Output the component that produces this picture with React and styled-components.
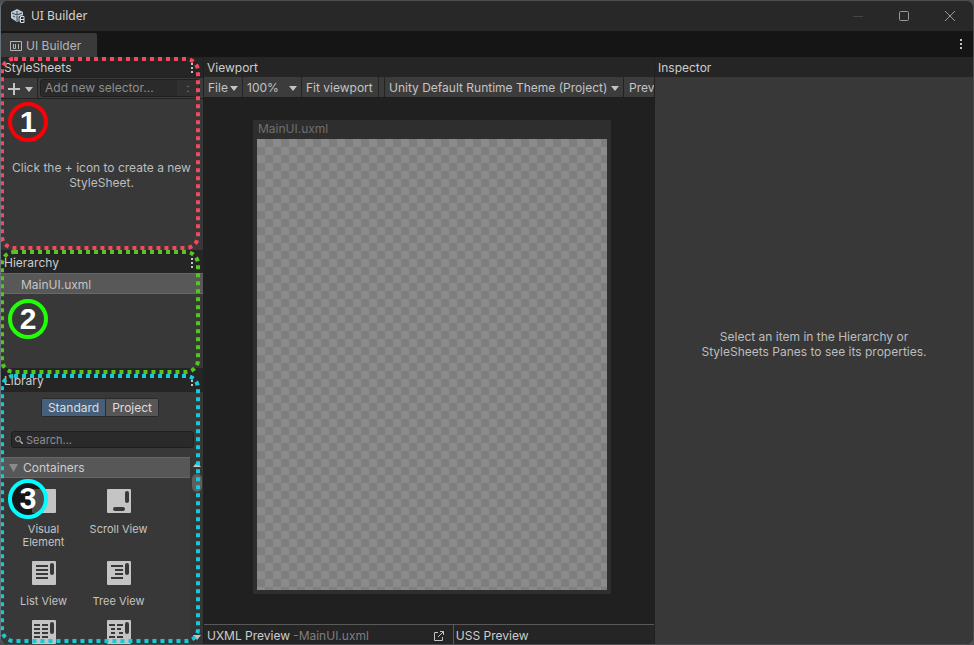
import React, { useState } from "react";
import styled, { createGlobalStyle } from "styled-components";

const GlobalStyle = createGlobalStyle`
  * { box-sizing: border-box; }
  body {
    margin: 0;
    background: #4c4e50;
    color: #c4c4c4;
    font: 12px/14px Inter, sans-serif;
    overflow: hidden;
  }
  button, input, select {
    font: inherit;
    color: inherit;
    margin: 0;
  }
  button {
    border: 0;
    padding: 0;
    background: none;
  }
`;

const Window = styled.div`
  height: 100vh;
  display: flex;
  flex-direction: column;
  background: #202020;
  border: 1px solid #4c4e50;
  border-left-color: #68707a;
  border-radius: 8px;
  overflow: hidden;
`;

const TitleBar = styled.header`
  flex: none;
  height: 30px;
  display: flex;
  align-items: center;
  padding: 0 17px 0 9px;
  gap: 5px;
  background: #282828;
`;

const Title = styled.h1`
  flex: 1;
  margin: 0;
  font: 12px/16px "Noto Sans", sans-serif;
  color: #d4d4d4;
`;

const WindowButtons = styled.div`
  display: flex;
  gap: 34px;
`;

const IconButton = styled.button`
  display: flex;
  align-items: center;
  justify-content: center;
  color: ${(p) => p.$color || "#c4c4c4"};
`;

const TabStrip = styled.nav`
  flex: none;
  height: 26px;
  display: flex;
  align-items: flex-end;
  justify-content: space-between;
  padding-right: 10px;
  background: #151515;
`;

const Tab = styled.button`
  height: 24px;
  width: 96px;
  display: flex;
  align-items: center;
  gap: 4px;
  padding: 2px 0 0 9px;
  color: #b4b4b4;
  background: #3a3a3a;
  border-radius: 2px 2px 0 0;
`;

const MenuSlot = styled.div`
  height: 26px;
  display: flex;
  align-items: center;
`;

const Workspace = styled.main`
  flex: 1;
  min-height: 0;
  display: flex;
  gap: 1px;
`;

const Sidebar = styled.aside`
  flex: none;
  width: 202px;
  display: flex;
  flex-direction: column;
`;

const Pane = styled.section`
  position: relative;
  z-index: ${(p) => p.$layer};
  flex: ${(p) => p.$grow} 1 0;
  min-height: 0;
  display: flex;
  flex-direction: column;
  background: #383838;
`;

const PaneHeader = styled.div`
  flex: none;
  height: ${(p) => p.$height || 20}px;
  display: flex;
  align-items: center;
  justify-content: space-between;
  padding: 2px 9px 0 3px;
  background: #252525;
`;

const PaneTitle = styled.h2`
  margin: 0;
  font-size: 12px;
  font-weight: 400;
  line-height: 14px;
  color: #cdcdcd;
`;

const Outline = styled.svg`
  position: absolute;
  inset: 0;
  width: 100%;
  height: 100%;
  overflow: visible;
  pointer-events: none;

  rect {
    x: 1px;
    y: ${(p) => p.$top}px;
    width: calc(100% - 6px);
    height: calc(100% + ${(p) => p.$extra}px);
    fill: none;
    stroke: ${(p) => p.$color};
    stroke-width: 4px;
    stroke-dasharray: 4 4;
  }
`;

const Badge = styled.span`
  position: absolute;
  left: 7px;
  top: ${(p) => p.$top}px;
  width: 40px;
  height: 40px;
  display: flex;
  align-items: center;
  justify-content: center;
  border: 4px solid ${(p) => p.$color};
  border-radius: 50%;
  background: ${(p) => p.$fill || "none"};
  color: #fff;
  font: bold 30px/32px ${(p) => p.$face || '"Liberation Sans"'}, sans-serif;
`;

const SelectorBar = styled.div`
  flex: none;
  height: 22px;
  display: flex;
  align-items: center;
  background: #3c3c3c;
  border-top: 1px solid #232323;
  border-bottom: 1px solid #232323;
`;

const AddButton = styled.button`
  height: 20px;
  width: 37px;
  display: flex;
  align-items: center;
  justify-content: center;
  gap: 5px;
  padding: 2px 0 0 2px;
  border-right: 1px solid #232323;
`;

const SelectorField = styled.div`
  flex: 1;
  min-width: 0;
  height: 18px;
  display: flex;
  margin: 0 3px 0 2px;
  background: #2a2a2a;
  border: 1px solid #202020;
  border-radius: 3px;
  overflow: hidden;
`;

const SelectorInput = styled.input`
  flex: 1;
  min-width: 0;
  padding: 0 4px;
  border: 0;
  background: none;

  &::placeholder { color: #8e8e8e; opacity: 1; }
`;

const PseudoButton = styled.button`
  width: 22px;
  color: #777;
  background: #303030;
`;

const Hint = styled.p`
  flex: 1;
  margin: 0;
  padding: ${(p) => p.$pad};
  display: flex;
  align-items: center;
  justify-content: center;
  text-align: center;
  line-height: 15px;
  color: #bdbdbd;
`;

const TreeRow = styled.button`
  flex: none;
  height: 21px;
  padding: 2px 0 0 20px;
  text-align: left;
  background: #585858;
  border-top: 1px solid #666;
  border-bottom: 1px solid #666;
`;

const Segments = styled.div`
  flex: none;
  align-self: center;
  display: flex;
  margin-top: 6px;
  margin-right: 4px;
  border: 1px solid #2a2a2a;
  border-radius: 3px;
`;

const Segment = styled.button`
  height: 17px;
  padding: 0 6px;
  color: #dedede;
  background: ${(p) => (p.$active ? "#46607c" : "#565656")};

  & + & { border-left: 1px solid #2a2a2a; }
`;

const SearchBox = styled.label`
  flex: none;
  height: 17px;
  display: flex;
  align-items: center;
  gap: 3px;
  margin: 14px 9px 9px 10px;
  padding: 0 3px;
  background: #2a2a2a;
  border: 1px solid #1e1e1e;
  border-radius: 3px;
  color: #b0b0b0;

  input {
    flex: 1;
    min-width: 0;
    padding: 0;
    border: 0;
    background: none;
    font-size: 11px;
  }
  input::placeholder { color: #8e8e8e; opacity: 1; }
`;

const LibraryBody = styled.div`
  flex: 1;
  min-height: 0;
  display: flex;
`;

const LibraryList = styled.div`
  flex: 1;
  overflow: hidden;
`;

const Foldout = styled.button`
  width: 100%;
  height: 21px;
  display: flex;
  align-items: center;
  gap: 5px;
  padding-left: 8px;
  color: #cdcdcd;
  background: #575757;
  border-top: 1px solid #666;
  border-bottom: 1px solid #666;
`;

const Tiles = styled.div`
  display: grid;
  grid-template-columns: 75px 75px;
  padding: 5px 0 0 5px;
`;

const Tile = styled.button`
  min-height: 59px;
  padding: 6px 8px;
  display: flex;
  flex-direction: column;
  align-items: center;
  gap: 10px;
  font-size: 11px;
  line-height: 13px;
`;

const Scroller = styled.div`
  flex: none;
  width: 13px;
  display: flex;
  flex-direction: column;
  align-items: center;
  padding: 5px 0 4px;
  background: #353535;
  color: #c4c4c4;
`;

const Thumb = styled.div`
  width: 10px;
  height: 18px;
  margin: 7px 0 auto;
  border-radius: 5px;
  background: #5e5e5e;
`;

const Center = styled.section`
  flex: 450 1 0;
  min-width: 0;
  display: flex;
  flex-direction: column;
`;

const Toolbar = styled.div`
  flex: none;
  height: 21px;
  display: flex;
  overflow: hidden;
  background: #3c3c3c;
  border-bottom: 1px solid #1e1e1e;
`;

const ToolButton = styled.button`
  flex: ${(p) => (p.$width ? "none" : 1)};
  width: ${(p) => p.$width}px;
  display: flex;
  align-items: center;
  justify-content: space-between;
  padding: 2px 4px 0;
  white-space: nowrap;
  border-right: 1px solid #232323;

  &:last-child {
    padding: 2px 0 0 5px;
    border: 0;
  }
`;

const ToolGap = styled.span`
  flex: none;
  width: 6px;
  border-right: 1px solid #232323;
`;

const Canvas = styled.div`
  flex: 1;
  min-height: 0;
  display: flex;
  padding: 22px 43px 30px 49px;
  background: #202020;
`;

const Artboard = styled.div`
  flex: 1;
  display: flex;
  flex-direction: column;
  padding: 2px 4px 4px;
  background: #2e2e2e;
  color: #6e6e6e;
`;

const ArtboardTitle = styled.span`
  height: 17px;
  padding: 0 1px;
`;

const Checker = styled.div`
  flex: 1;
  background: repeating-conic-gradient(#7e7e7e 0 25%, #8b8b8b 0 50%) 0 0 / 16px 16px;
`;

const PreviewBar = styled.footer`
  flex: none;
  height: 20px;
  display: flex;
  background: #252525;
  border-top: 1px solid #595959;
`;

const Preview = styled.div`
  flex: ${(p) => p.$grow} 1 0;
  display: flex;
  align-items: center;
  gap: 3px;
  padding: 3px 8px 0 3px;
  color: #cdcdcd;

  & + & {
    padding-left: 2px;
    border-left: 1px solid #595959;
  }
`;

const FileName = styled.span`
  flex: 1;
  color: #7e7e7e;
`;

const Inspector = styled.aside`
  flex: 318 1 0;
  display: flex;
  flex-direction: column;
  background: #383838;
`;

const Dots = () => (
  <svg width="4" height="12" fill="currentColor">
    <path d="M1 1h2v2H1zM1 5h2v2H1zM1 9h2v2H1z" />
  </svg>
);

const Arrow = ({ up }) => (
  <svg width="8" height="5" fill="currentColor">
    <path d={up ? "M0 5h8L4 0z" : "M0 0h8L4 5z"} />
  </svg>
);

const UnityLogo = () => (
  <svg width="16" height="16" viewBox="0 0 16 16">
    <path d="M7 1l6 3v5l-6 5-6-4V4z" fill="#b9c9d6" />
    <path d="M7 3v4m0 0L2 5m5 2l5-2M7 8v5M3 8l2 1" stroke="#34434f" fill="none" />
    <circle cx="12" cy="11.5" r="4" fill="#282828" />
    <path d="M10.500 8.500h3.500v3h-3.500zM10.500 11.500h3.500v3h-3.500zM9 9.500v4" stroke="#d5dde3" fill="none" />
  </svg>
);

const glyphs = {
  visual: null,
  scroll: (
    <>
      <rect x="18" y="2" width="4" height="12" rx="2" />
      <rect x="6" y="18" width="12" height="4" rx="2" />
    </>
  ),
  list: (
    <>
      <path d="M4 4h12v2H4zM4 8h12v2H4zM4 12h12v2H4zM4 16h12v2H4z" />
      <rect x="18" y="2" width="4" height="12" rx="2" />
    </>
  ),
  tree: (
    <>
      <path d="M4 4h12v2H4zM8 8h8v2H8zM8 12h8v2H8zM4 16h12v2H4z" />
      <rect x="18" y="2" width="4" height="12" rx="2" />
    </>
  ),
  columns: (
    <>
      <path d="M2 4h6v2H2zM10 4h6v2h-6zM2 8h6v2H2zM10 8h6v2h-6zM2 12h6v2H2zM10 12h6v2h-6zM2 16h6v2H2zM10 16h6v2h-6z" />
      <rect x="18" y="2" width="4" height="12" rx="2" />
    </>
  ),
  treeColumns: (
    <>
      <path d="M2 4h6v2H2zM10 4h6v2h-6zM4 8h4v2H4zM10 8h4v2h-4zM4 12h4v2H4zM12 12h4v2h-4zM2 16h6v2H2zM10 16h6v2h-6z" />
      <rect x="18" y="2" width="4" height="12" rx="2" />
    </>
  ),
};

const items = [
  { glyph: "visual", label: "Visual Element" },
  { glyph: "scroll", label: "Scroll View" },
  { glyph: "list", label: "List View" },
  { glyph: "tree", label: "Tree View" },
  { glyph: "columns", label: "" },
  { glyph: "treeColumns", label: "" },
];

function LibraryTile({ glyph, label }) {
  return (
    <Tile aria-label={label || glyph}>
      <svg width="24" height="24" fill="#383838">
        <rect width="24" height="24" rx="1" fill="#c4c4c4" />
        {glyphs[glyph]}
      </svg>
      {label}
    </Tile>
  );
}

function App() {
  const [library, setLibrary] = useState("Standard");

  return (
    <>
      <GlobalStyle />
      <Window>
        <TitleBar>
          <UnityLogo />
          <Title>UI Builder</Title>
          <WindowButtons>
            <IconButton aria-label="Minimize" $color="#444">
              <svg width="12" height="12" stroke="currentColor"><path d="M1 6.5h10" /></svg>
            </IconButton>
            <IconButton aria-label="Maximize" $color="#9a9a9a">
              <svg width="12" height="12" fill="none" stroke="currentColor">
                <rect x="1.5" y="1.5" width="9" height="9" rx="1" />
              </svg>
            </IconButton>
            <IconButton aria-label="Close" $color="#9a9a9a">
              <svg width="12" height="12" stroke="currentColor"><path d="M1 1l10 10M11 1L1 11" /></svg>
            </IconButton>
          </WindowButtons>
        </TitleBar>

        <TabStrip>
          <Tab>
            <svg width="12" height="12" fill="none" stroke="currentColor">
              <path d="M.5 1.5h11v9H.5zM3.500 4v4.500h2V4M8.500 4v5" />
            </svg>
            UI Builder
          </Tab>
          <MenuSlot>
            <IconButton aria-label="Window menu"><Dots /></IconButton>
          </MenuSlot>
        </TabStrip>

        <Workspace>
          <Sidebar>
            <Pane $grow={193} $layer={3}>
              <PaneHeader>
                <PaneTitle>StyleSheets</PaneTitle>
                <IconButton aria-label="StyleSheets menu"><Dots /></IconButton>
              </PaneHeader>
              <SelectorBar>
                <AddButton aria-label="Add StyleSheet">
                  <svg width="12" height="12" stroke="currentColor" strokeWidth="2"><path d="M6 0v12M0 6h12" /></svg>
                  <Arrow />
                </AddButton>
                <SelectorField>
                  <SelectorInput aria-label="Selector" placeholder="Add new selector..." />
                  <PseudoButton aria-label="Pseudo states">:</PseudoButton>
                </SelectorField>
              </SelectorBar>
              <Hint $pad="0 9px 0 8px">Click the + icon to create a new StyleSheet.</Hint>
              <Outline $color="#f4495d" $top={2} $extra={-4}><rect rx="12" /></Outline>
              <Badge $color="#fb0007" $top={45}>1</Badge>
            </Pane>

            <Pane $grow={118} $layer={2}>
              <PaneHeader $height={23}>
                <PaneTitle>Hierarchy</PaneTitle>
                <IconButton aria-label="Hierarchy menu"><Dots /></IconButton>
              </PaneHeader>
              <TreeRow>MainUI.uxml</TreeRow>
              <Outline $color="#55c51f" $top={2} $extra={2}><rect rx="12" /></Outline>
              <Badge $color="#21ff06" $top={49}>2</Badge>
            </Pane>

            <Pane $grow={276} $layer={1}>
              <PaneHeader $height={24}>
                <PaneTitle>Library</PaneTitle>
                <IconButton aria-label="Library menu"><Dots /></IconButton>
              </PaneHeader>
              <Segments>
                {["Standard", "Project"].map((name) => (
                  <Segment key={name} $active={library === name} onClick={() => setLibrary(name)}>
                    {name}
                  </Segment>
                ))}
              </Segments>
              <SearchBox>
                <svg width="8" height="8" fill="none" stroke="currentColor">
                  <circle cx="3" cy="3" r="2.4" />
                  <path d="M5 5l3 3" strokeWidth="1.5" />
                </svg>
                <input aria-label="Search library" placeholder="Search..." />
              </SearchBox>
              <LibraryBody>
                <LibraryList>
                  <Foldout>
                    <svg width="9" height="8" fill="#8a8a8a"><path d="M0 0h9L4.500 8z" /></svg>
                    Containers
                  </Foldout>
                  <Tiles>
                    {items.map((item) => <LibraryTile key={item.glyph} {...item} />)}
                  </Tiles>
                </LibraryList>
                <Scroller>
                  <Arrow up />
                  <Thumb />
                  <Arrow />
                </Scroller>
              </LibraryBody>
              <Outline $color="#16cbd3" $top={8} $extra={-11}><rect rx="12" /></Outline>
              <Badge $color="#00fdff" $fill="rgba(0, 0, 0, 0.6)" $face="Roboto" $top={111}>3</Badge>
            </Pane>
          </Sidebar>

          <Center>
            <PaneHeader>
              <PaneTitle>Viewport</PaneTitle>
            </PaneHeader>
            <Toolbar>
              <ToolButton $width={39}>File <Arrow /></ToolButton>
              <ToolButton $width={59}>100% <Arrow /></ToolButton>
              <ToolButton $width={77}>Fit viewport</ToolButton>
              <ToolGap />
              <ToolButton $width={239}>Unity Default Runtime Theme (Project) <Arrow /></ToolButton>
              <ToolButton>Prev</ToolButton>
            </Toolbar>
            <Canvas>
              <Artboard>
                <ArtboardTitle>MainUI.uxml</ArtboardTitle>
                <Checker />
              </Artboard>
            </Canvas>
            <PreviewBar>
              <Preview $grow={5}>
                UXML Preview
                <FileName>-MainUI.uxml</FileName>
                <IconButton aria-label="Open in editor">
                  <svg width="12" height="12" fill="none" stroke="currentColor">
                    <path d="M5 2.500H1.500v8h8V7M7 1.500h3.500V5M10.500 1.500L5 7" />
                  </svg>
                </IconButton>
              </Preview>
              <Preview $grow={4}>USS Preview</Preview>
            </PreviewBar>
          </Center>

          <Inspector>
            <PaneHeader>
              <PaneTitle>Inspector</PaneTitle>
            </PaneHeader>
            <Hint $pad="0 40px 34px">Select an item in the Hierarchy or StyleSheets Panes to see its properties.</Hint>
          </Inspector>
        </Workspace>
      </Window>
    </>
  );
}

export default App;
